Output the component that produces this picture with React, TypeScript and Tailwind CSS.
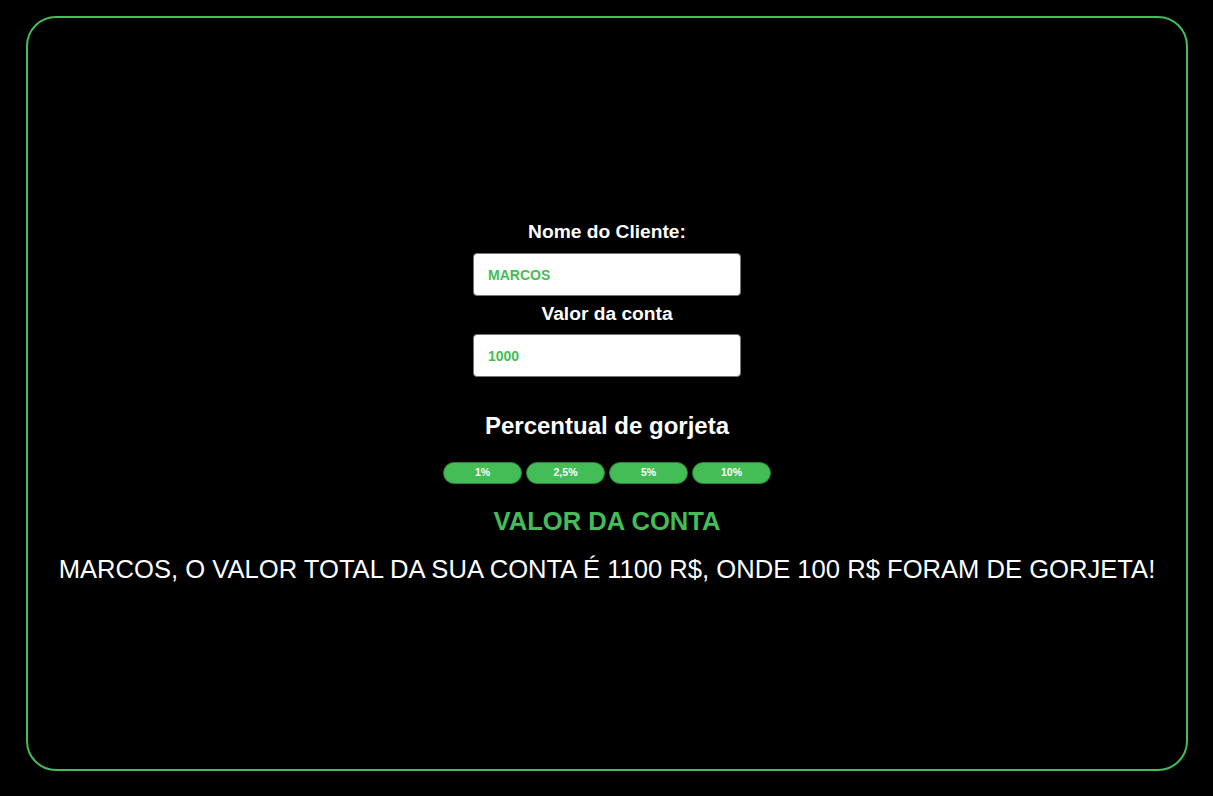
import { useState } from 'react';

const tips = ['1%', '2,5%', '5%', '10%'];

export default function App() {
  const [nome] = useState('MARCOS');
  const [valor] = useState('1000');

  return (
    <div className="min-h-[796px] w-full bg-black pt-[16px] font-['Liberation_Sans',Arial,sans-serif]">
      <div className="ml-[26px] flex h-[755px] w-[1162px] flex-col items-center rounded-[30px] border-2 border-[#44bd56] pt-[203px]">
        <label className="text-[19.2px] font-bold leading-[22px] text-white">Nome do Cliente:</label>
        <input
          readOnly
          value={nome}
          className="mt-[10px] h-[43px] w-[268px] rounded-[4px] border border-[#767676] bg-white px-[14px] text-[14px] font-bold text-[#44bd56] outline-none"
        />
        <label className="mt-[7px] text-[19.2px] font-bold leading-[22px] text-white">Valor da conta</label>
        <input
          readOnly
          value={valor}
          className="mt-[9px] h-[43px] w-[268px] rounded-[4px] border border-[#767676] bg-white px-[14px] text-[14px] font-bold text-[#44bd56] outline-none"
        />

        <h3 className="mt-[35px] text-[24px] font-bold leading-[28px] text-white">Percentual de gorjeta</h3>

        <div className="mt-[22px] flex gap-[4px]">
          {tips.map((t) => (
            <button
              key={t}
              className="h-[22px] w-[79px] rounded-full border border-[#2e7f3a] bg-[#44bd56] text-[10.5px] font-bold text-white"
            >
              {t}
            </button>
          ))}
        </div>

        <h2 className="mt-[23px] text-[25.6px] font-bold leading-[29px] text-[#44bd56]">VALOR DA CONTA</h2>

        <p className="mt-[19px] text-[25.6px] leading-[29px] text-white">
          MARCOS, O VALOR TOTAL DA SUA CONTA É 1100 R$, ONDE 100 R$ FORAM DE GORJETA!
        </p>
      </div>
    </div>
  );
}
